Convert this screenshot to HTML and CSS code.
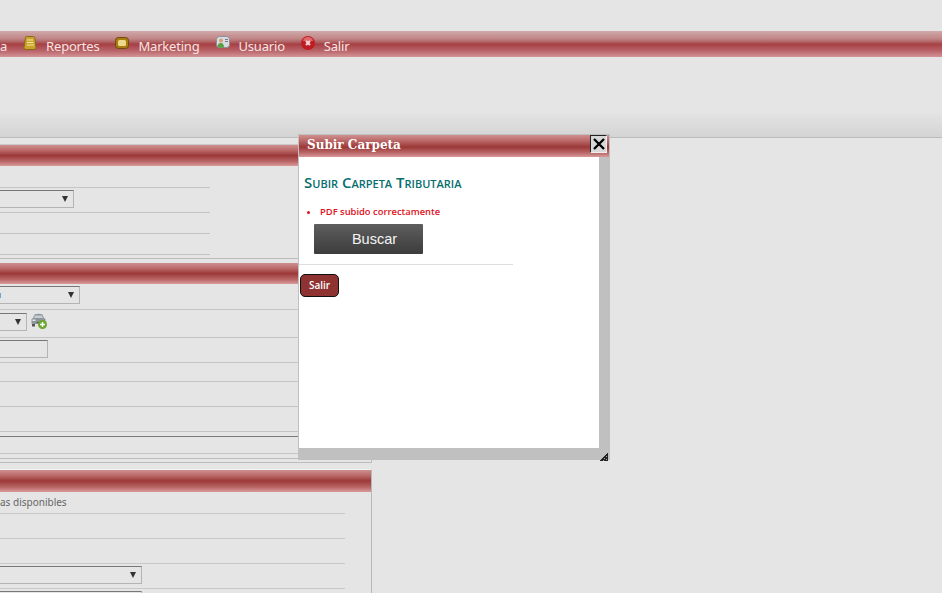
FILE: index.html
```html
<!DOCTYPE html>
<html lang="es">
<head>
<meta charset="utf-8">
<title>Subir Carpeta</title>
<link rel="stylesheet" href="styles.css">
</head>
<body>
<nav class="nav">
  <span class="nav-text">a</span>
  <svg class="nav-icon" viewBox="0 0 14 14"><path d="M2.500 1.500q0-1 1-1h7q1 0 1.500 2l1 9q0 2-2 2H3q-2 0-2-2z" fill="#c9a32a" stroke="#8a6a14"/><path d="M4 4h6M4 6.500h6.500M4 9h7" stroke="#f3e6a0"/></svg>
  <span class="nav-text">Reportes</span>
  <svg class="nav-icon" viewBox="0 0 14 14"><rect x="0.500" y="1.500" width="13" height="11" rx="3" fill="#a87c10" stroke="#6b4d08"/><rect x="3" y="4" width="8" height="6" rx="1.500" fill="#eed98a"/></svg>
  <span class="nav-text">Marketing</span>
  <svg class="nav-icon" viewBox="0 0 14 14"><rect x="0.500" y="0.500" width="13" height="11" rx="3" fill="#d8dce0" stroke="#8a9096"/><circle cx="5" cy="4.500" r="2" fill="#d8a070"/><path d="M1.500 11.500c0-3.500 1.500-4.500 3.500-4.500s3 1.500 3 4.500z" fill="#58a040"/><path d="M9 3.500h3M9 5.500h3" stroke="#6a7a8a"/></svg>
  <span class="nav-text">Usuario</span>
  <svg class="nav-icon" viewBox="0 0 14 14"><circle cx="7" cy="7" r="7" fill="#c01c24"/><path d="M2 5a5 4 0 0 1 10 0z" fill="#e06a6a"/><path d="M5 5l4 4M9 5l-4 4" stroke="#f6d8d8" stroke-width="2"/></svg>
  <span class="nav-text">Salir</span>
</nav>
<div class="strip"></div>

<main class="content">
  <section class="sec-one">
    <h2 class="band"></h2>
    <div class="short-row row-a"></div>
    <div class="short-row row-b"><span class="select select-74"></span></div>
    <div class="short-row row-c"></div>
    <div class="short-row row-c"></div>
  </section>

  <section class="sec-two">
    <h2 class="band"></h2>
    <div class="row row-first"><span class="select select-80"><i class="dot"></i></span></div>
    <div class="row row-second">
      <span class="select select-27"></span>
      <svg class="car" viewBox="0 0 16 16"><path d="M3.500 1.500q4-1.500 8 0l1.500 3.500 1.500 1v5H.5V6L2 5z" fill="#8d959c"/><path d="M4 2.500h7l1 2.500H3z" fill="#c9ced2"/><rect x="1.500" y="6.500" width="3" height="1.500" fill="#e6e6e6"/><rect x="5.500" y="9" width="4" height="1" fill="#555"/><rect x="1" y="11" width="3" height="2.500" fill="#555"/><circle cx="11.500" cy="11.500" r="4.500" fill="#6aa62a"/><path d="M11.500 9v5M9 11.500h5" stroke="#fff" stroke-width="1.500"/></svg>
    </div>
    <div class="row row-input"><span class="text-input"></span></div>
    <div class="row row-h19"></div>
    <div class="row row-h25"></div>
    <div class="row row-h25"></div>
    <div class="dark-row"></div>
    <div class="end-row"></div>
    <div class="outer-row outer-a"></div>
    <div class="outer-row outer-b"></div>
  </section>

  <section class="sec-three">
    <h2 class="band band-three"></h2>
    <div class="wide-row wide-text"><span class="small-text">as disponibles</span></div>
    <div class="wide-row"></div>
    <div class="wide-row"></div>
    <div class="wide-row wide-select"><span class="select select-142"></span></div>
    <div class="wide-row wide-select"><span class="select select-142"></span></div>
  </section>
</main>

<div class="modal">
  <header class="modal-title">
    <span>Subir Carpeta</span>
    <button class="close" type="button" aria-label="Cerrar"><svg viewBox="0 0 12 12"><path d="M1 1l10 10M11 1L1 11" stroke="#000" stroke-width="2.400"/></svg></button>
  </header>
  <div class="modal-body">
    <h3 class="modal-heading">Subir Carpeta Tributaria</h3>
    <ul class="messages"><li>PDF subido correctamente</li></ul>
    <button class="search" type="button">Buscar</button>
    <hr class="rule">
    <button class="exit" type="button">Salir</button>
  </div>
  <svg class="grip" viewBox="0 0 8 8"><path d="M7 0h1v8H0V7h1V6h1V5h1V4h1V3h1V2h1V1h1z" fill="#222"/><path d="M6 3h1v1H6zM4 5h1v1H4zM6 6h1v1H6zM3 7h1v1H3z" fill="#aaa"/></svg>
</div>
</body>
</html>
```
FILE: styles.css
```css
* { box-sizing: border-box; }
html, body { margin: 0; height: 593px; overflow: hidden; }
body { background: #e5e5e5; position: relative; font-family: "Noto Sans", sans-serif; }

.nav {
  margin-top: 31px;
  height: 26px;
  display: flex;
  align-items: center;
  background: linear-gradient(#d0a9aa 0, #c08586 30%, #ab5557 46%, #a63f43 50%, #b86267 75%, #d39496 100%);
}
.nav-text { color: #f7e4e4; font-size: 13px; letter-spacing: -0.015em; line-height: 26px; padding-top: 4px; }
.nav-icon { width: 14px; height: 14px; margin: -3px 9px 0 16px; flex: none; }

.strip {
  margin-top: 56px;
  height: 25px;
  background: linear-gradient(#e3e3e3, #d4d4d4);
  border-bottom: 1px solid #bdbdbd;
}

.content { width: 372px; }

.band {
  margin: 0;
  height: 21px;
  background: linear-gradient(#cf8f8f 0, #bb6a6a 25%, #9c3838 50%, #b96666 78%, #d99a9a 100%);
}

.sec-one { margin-top: 6px; width: 298px; border-top: 1px solid #c8c8c8; }
.short-row { width: 210px; border-bottom: 1px solid #c4c4c4; display: flex; align-items: flex-start; }
.row-a { height: 22px; }
.row-b { height: 25px; padding-top: 2px; }
.row-c { height: 21px; }

.sec-two { margin-top: 3px; border-top: 1px solid #bdbdbd; padding-top: 4px; }
.row { width: 298px; border-bottom: 1px solid #c4c4c4; display: flex; align-items: flex-start; gap: 4px; }
.row-first { height: 26px; padding-top: 2px; }
.row-second { height: 28px; padding-top: 3px; }
.row-input { height: 25px; padding-top: 2px; }
.row-h25 { height: 25px; }
.row-h19 { height: 19px; }
.dark-row { width: 298px; height: 5px; border-bottom: 1px solid #7a7a7a; }
.end-row { width: 298px; height: 17px; border-bottom: 1px solid #c4c4c4; }
.outer-row { width: 372px; border-bottom: 1px solid #bcbcbc; border-right: 1px solid #bcbcbc; }
.outer-a { height: 5px; }
.outer-b { height: 4px; }

.select {
  display: block;
  height: 18px;
  border: 1px solid #b4b4b4;
  border-top-color: #777;
  border-left: 0;
  position: relative;
  flex: none;
}
.select::after {
  content: "";
  position: absolute;
  right: 5px;
  top: 5px;
  border-left: 3px solid transparent;
  border-right: 3px solid transparent;
  border-top: 6px solid #333;
}
.select-74 { width: 74px; }
.select-80 { width: 80px; }
.select-27 { width: 27px; }
.select-142 { width: 142px; }
.dot { position: absolute; left: 0; top: 6px; width: 1px; height: 5px; background: #6fa5c8; }
.car { width: 16px; height: 16px; flex: none; }
.text-input { display: block; width: 48px; height: 18px; border: 1px solid #b4b4b4; border-top-color: #777; border-left: 0; }

.sec-three {
  margin-top: 6px;
  width: 372px;
  height: 125px;
  border-right: 1px solid #b8b8b8;
  border-top: 1px solid #f2f2f2;
}
.band-three { height: 22px; }
.wide-row { width: 345px; height: 25px; border-bottom: 1px solid #c8c8c8; display: flex; align-items: flex-start; }
.wide-text { height: 22px; align-items: center; }
.wide-select { padding-top: 2px; }
.small-text { font-size: 10px; color: #666; margin-top: -1px; }

.modal {
  position: absolute;
  left: 298px;
  top: 134px;
  width: 312px;
  height: 326px;
  background: #c0c0c0;
  padding: 1px 11px 12px 1px;
  display: flex;
  flex-direction: column;
}
.modal-title {
  margin-right: -10px;
  height: 22px;
  flex: none;
  display: flex;
  align-items: flex-start;
  justify-content: space-between;
  padding: 0 2px 0 8px;
  color: #fff;
  font: bold 12px/21px "DejaVu Serif", serif;
  background: linear-gradient(#cf8f8f 0, #bb6a6a 25%, #9c3838 55%, #b96666 80%, #d99a9a 100%);
}
.close {
  width: 17px;
  height: 18px;
  padding: 0;
  border: 1px solid #eee;
  border-top-color: #222;
  border-left-color: #222;
  outline: 0;
  background: #d8d8d8;
  display: flex;
  align-items: center;
  justify-content: center;
}
.close svg { width: 12px; height: 12px; display: block; }
.modal-body { flex: 1; background: #fff; display: flex; flex-direction: column; align-items: flex-start; }
.modal-heading {
  margin: 16px 0 0 5px;
  font: 600 15px/18px "Open Sans", sans-serif;
  font-variant: small-caps;
  color: #066e6e;
}
.messages {
  margin: 14px 0 0;
  padding: 0 0 0 21px;
  list-style: disc;
  color: #e0101c;
  font: 600 9.400px/13px "Open Sans", sans-serif;
}
.search {
  margin: 6px 0 0 15px;
  width: 109px;
  height: 30px;
  border: 0;
  border-radius: 1px;
  padding: 0 0 1px 12px;
  background: linear-gradient(#5e5e5e, #3c3c3c);
  color: #f4f4f4;
  font: 14.500px "Liberation Sans", sans-serif;
}
.rule { width: 214px; margin: 10px 0 0; border: 0; border-top: 1px solid #ddd; }
.exit {
  margin: 9px 0 0 1px;
  width: 39px;
  height: 23px;
  padding: 0 0 2px;
  background: #8e3232;
  border: 1px solid #111;
  border-radius: 5px;
  color: #fff;
  font: 600 10px "Open Sans", sans-serif;
}
.grip { position: absolute; right: 2px; bottom: -1px; width: 8px; height: 8px; }
```
